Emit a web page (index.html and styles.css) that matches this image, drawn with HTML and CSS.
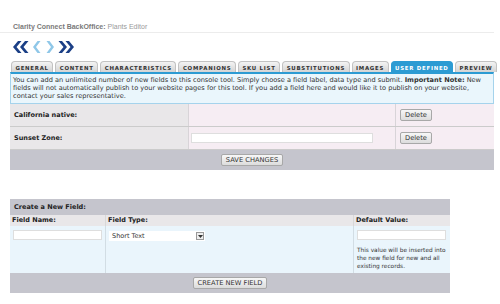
FILE: index.html
```html
<!DOCTYPE html>
<html>
<head>
<meta charset="utf-8">
<link rel="stylesheet" href="styles.css">
</head>
<body>
<div class="page">
  <div class="title"><span class="app">Clarity Connect BackOffice:</span> <span class="sub">Plants Editor</span></div>
  <div class="nav">
    <svg width="17" height="14" viewBox="0 0 17 14"><path d="M6 1 L1 7 L6 13 L9.5 13 L4.5 7 L9.5 1 Z M13 1 L8 7 L13 13 L16.5 13 L11.5 7 L16.5 1 Z" fill="#1b3f86"/></svg>
    <svg width="10" height="14" viewBox="0 0 10 14"><path d="M5.5 1 L1 7 L5.5 13 L8.5 13 L4 7 L8.5 1 Z" fill="#8fc7e8"/></svg>
    <svg width="10" height="14" viewBox="0 0 10 14"><path d="M4.5 1 L9 7 L4.5 13 L1.5 13 L6 7 L1.5 1 Z" fill="#8fc7e8"/></svg>
    <svg width="17" height="14" viewBox="0 0 17 14"><path d="M4 1 L9 7 L4 13 L0.5 13 L5.5 7 L0.5 1 Z M11 1 L16 7 L11 13 L7.5 13 L12.5 7 L7.5 1 Z" fill="#1b3f86"/></svg>
  </div>
  <div class="tabs">
    <span class="tab">GENERAL</span>
    <span class="tab">CONTENT</span>
    <span class="tab">CHARACTERISTICS</span>
    <span class="tab">COMPANIONS</span>
    <span class="tab">SKU LIST</span>
    <span class="tab">SUBSTITUTIONS</span>
    <span class="tab">IMAGES</span>
    <span class="tab active">USER DEFINED</span>
    <span class="tab">PREVIEW</span>
  </div>
  <div class="info">You can add an unlimited number of new fields to this console tool. Simply choose a field label, data type and submit. <b>Important Note:</b> New fields will not automatically publish to your website pages for this tool. If you add a field here and would like it to publish on your website, contact your sales representative.</div>
  <div class="fields">
    <div class="row">
      <div class="lbl">California native:</div>
      <div class="val"></div>
      <div class="act"><button class="btn">Delete</button></div>
    </div>
    <div class="row">
      <div class="lbl">Sunset Zone:</div>
      <div class="val"><input class="txt wide" type="text"></div>
      <div class="act"><button class="btn">Delete</button></div>
    </div>
    <div class="bar"><button class="btn">SAVE CHANGES</button></div>
  </div>

  <div class="create">
    <div class="chead">Create a New Field:</div>
    <div class="cgrid">
      <div class="sh">Field Name:</div>
      <div class="sh">Field Type:</div>
      <div class="sh">Default Value:</div>
      <div class="cb"><input class="txt name" type="text"></div>
      <div class="cb"><div class="select"><span>Short Text</span><span class="dd"><svg width="5" height="3" viewBox="0 0 5 3"><path d="M0 0 H5 L2.5 3 Z" fill="#333"/></svg></span></div></div>
      <div class="cb"><input class="txt def" type="text"><p class="hint">This value will be inserted into the new field for new and all existing records.</p></div>
    </div>
    <div class="bar"><button class="btn">CREATE NEW FIELD</button></div>
  </div>
</div>
</body>
</html>
```

FILE: styles.css
```css
html, body { margin: 0; padding: 0; background: #fff; }
body { font-family: "DejaVu Sans", Verdana, sans-serif; color: #333; }
.page { padding: 0 6px 0 10px; }
.title {
  font-family: "Liberation Sans", Arial, sans-serif;
  font-size: 7px;
  line-height: 8px;
  padding: 23px 0 1px 13px;
  border-bottom: 1px solid #ececec;
  margin-left: -10px;
}
.title .app { color: #7a7a7a; font-weight: bold; }
.title .sub { color: #9a9a9a; }
.nav { display: flex; gap: 3px; align-items: center; padding: 7px 0 0 2px; height: 14px; }
.nav svg { display: block; }
.tabs { display: flex; gap: 2px; padding: 7px 0 0 1px; align-items: flex-end; }
.tab {
  flex: none;
  white-space: nowrap;
  font-size: 5.4px;
  font-weight: bold;
  letter-spacing: 0.75px;
  color: #333;
  height: 11px;
  line-height: 10px;
  padding: 1px 3.5px 0;
  border: 1px solid #c2c2c2;
  border-bottom: 0;
  border-radius: 4px 4px 0 0;
  background: linear-gradient(#f4f4f4, #d4d4d4);
  box-sizing: border-box;
  overflow: hidden;
}
.tab.active { background: #2c9bd3; border-color: #2c9bd3; color: #fff; }
.info {
  background: #eaf6fc;
  border: 1px solid #a5d3ec;
  border-top: 2px solid #2c9bd3;
  font-size: 6.6px;
  line-height: 8px;
  padding: 2px 2px 3px 2px;
  color: #333;
}
.info b { font-weight: bold; }
.fields { width: 484px; }
.row { display: grid; grid-template-columns: 179px 207px 98px; height: 22px; border-bottom: 1px solid #cbcbcb; }
.row:last-of-type { border-bottom: 0; }
.lbl { background: #e9e7e9; font-size: 6.5px; font-weight: bold; color: #222; display: flex; align-items: center; padding-left: 4px; border-right: 1px solid #d8d4d8; }
.val { background: #f6edf3; display: flex; align-items: center; padding-left: 2px; border-right: 1px solid #d8d4d8; }
.act { background: #f6edf3; display: flex; align-items: center; padding-left: 4px; }
.txt { border: 1px solid #dedede; background: #fff; height: 10px; box-sizing: border-box; padding: 0; margin: 0; }
.wide { width: 182px; }
.btn {
  font-family: "DejaVu Sans", Verdana, sans-serif;
  font-size: 6.7px;
  color: #333;
  height: 12px;
  padding: 0 4px;
  border: 1px solid #a8a8a8;
  border-radius: 2px;
  background: linear-gradient(#f7f7f7, #dcdcdc);
  line-height: 10px;
  margin: 0;
}
.bar { background: #c5c5cd; height: 20px; display: flex; align-items: center; justify-content: center; }
.create { width: 440px; margin-top: 29px; }
.chead { background: #c5c5cd; height: 16px; font-size: 6.5px; font-weight: bold; color: #222; display: flex; align-items: center; padding-left: 4px; }
.cgrid { display: grid; grid-template-columns: 96px 248px 96px; }
.sh { background: #e9e7e9; height: 11px; font-size: 6.5px; font-weight: bold; color: #222; padding-left: 2px; line-height: 11px; border-right: 1px solid #d8d8d8; }
.cb { background: #eaf5fc; height: 47px; padding: 4px 0 0 3px; box-sizing: border-box; border-right: 1px solid #d2dde4; }
.sh:nth-child(3), .cb:nth-child(6) { border-right: 0; }
.name { width: 89px; display: block; }
.def { width: 89px; display: block; }
.select { width: 96px; height: 10px; background: #fff; display: flex; justify-content: space-between; align-items: center; font-size: 6.5px; padding-left: 3px; box-sizing: border-box; margin-top: 1px; }
.dd { width: 8px; height: 8px; border: 1px solid #999; background: #eee; display: flex; align-items: center; justify-content: center; box-sizing: border-box; margin-right: 1px; }
.dd svg { display: block; }
.hint { font-size: 5.8px; line-height: 8px; margin: 6px 0 0 0; color: #333; }
```
